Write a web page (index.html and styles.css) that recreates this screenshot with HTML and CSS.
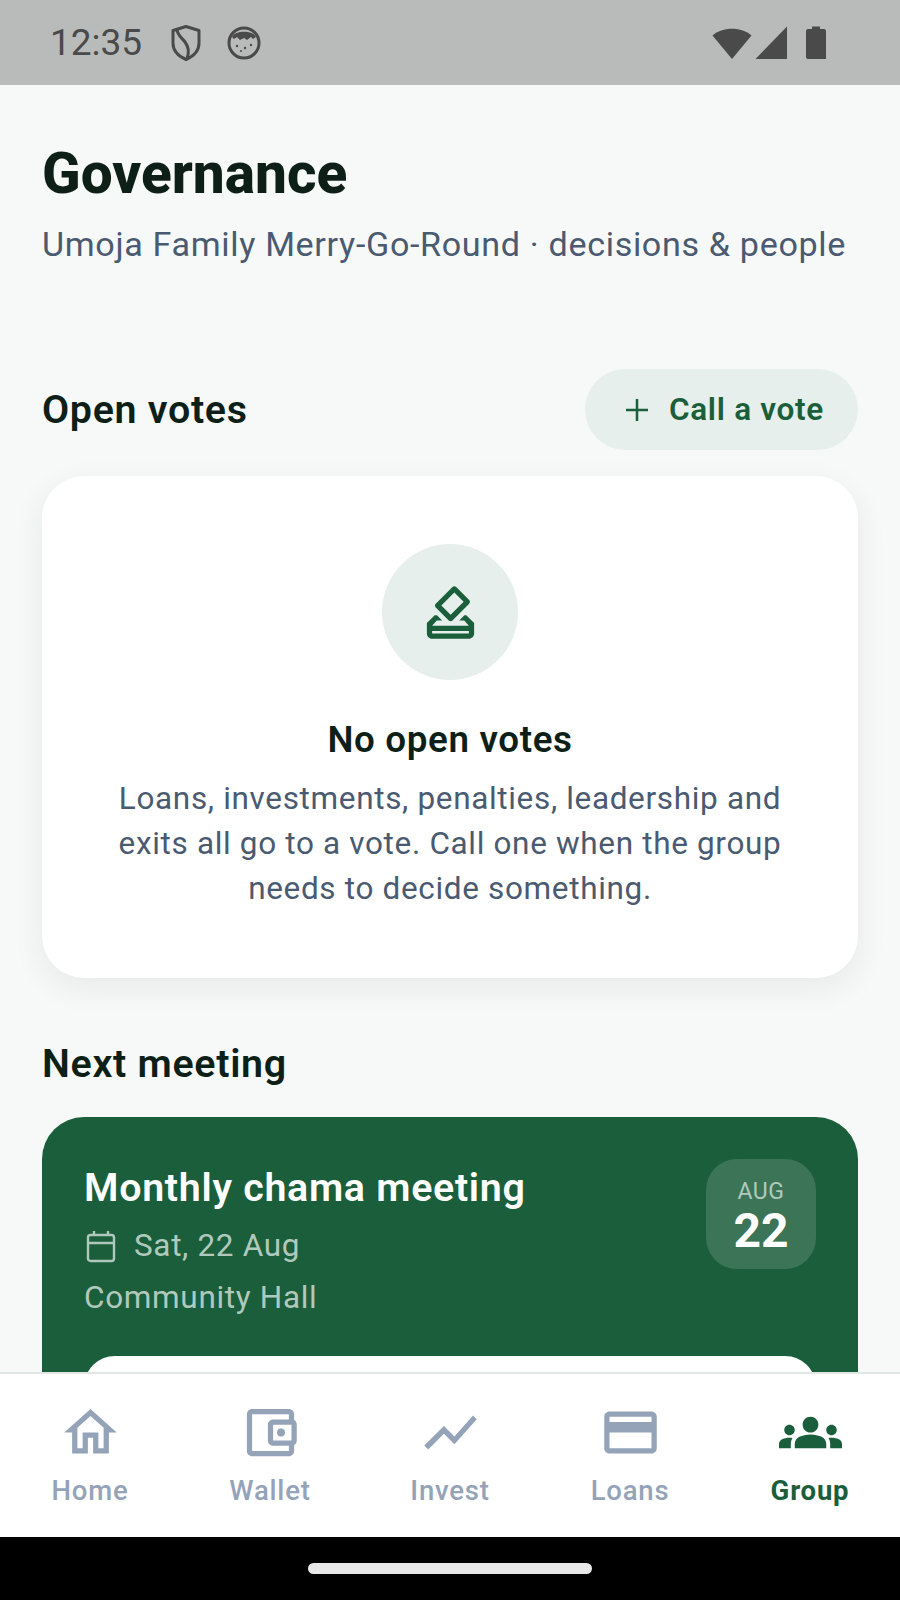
FILE: index.html
```html
<!DOCTYPE html>
<html lang="en">
<head>
    <meta charset="UTF-8">
    <meta name="viewport" content="width=device-width, initial-scale=1.0">
    <title>Governance</title>
    <link rel="stylesheet" href="styles.css">
</head>
<body>
<div class="screen">
    <!-- Status bar -->
    <div class="status-bar">
        <div class="status-left">
            <span class="clock">12:35</span>
            <svg class="shield-icon" viewBox="0 0 30 36" width="30" height="36">
                <path d="M15 1.500 L28 5.500 V18 C28 26 22 31.500 15 34.500 C8 31.500 2 26 2 18 V5.500 Z" fill="none" stroke="#4a4a4a" stroke-width="3" stroke-linejoin="round"/>
                <path d="M6 4 C6 10 11 13 14 17 C17 21 19 26 16 33" fill="none" stroke="#4a4a4a" stroke-width="3"/>
            </svg>
            <svg class="cookie-icon" viewBox="0 0 34 34" width="34" height="34">
                <circle cx="17" cy="17" r="15" fill="#b9baba" stroke="#4a4a4a" stroke-width="3"/>
                <path d="M5 11 C8 4 26 4 29 11 L26 13 L24 11 L20 14 L17 12 L13 14 L10 11 L7 13 Z" fill="#4a4a4a"/>
                <circle cx="10" cy="20" r="1.200" fill="#4a4a4a"/>
                <circle cx="18" cy="22" r="1.200" fill="#4a4a4a"/>
                <circle cx="24" cy="19" r="1.200" fill="#4a4a4a"/>
                <circle cx="14" cy="25" r="1" fill="#4a4a4a"/>
            </svg>
        </div>
        <div class="status-right">
            <svg viewBox="0 0 40 34" width="40" height="34"><path d="M0.500 9.500 C10 0.500 30 0.500 39.500 9.500 L20 33 Z" fill="#4a4a4a"/></svg>
            <svg viewBox="0 0 32 34" width="32" height="34"><path d="M32 0.500 V33 H0.500 Z" fill="#4a4a4a"/></svg>
            <svg class="battery-icon" viewBox="0 0 20 34" width="20" height="34"><path d="M6 0.500 H14 V3 H18 Q20 3 20 5 V33 H2 Q0 33 0 31 V5 Q0 3 2 3 H6 Z" fill="#4a4a4a"/></svg>
        </div>
    </div>

    <!-- Scrolling content -->
    <div class="content">
        <h1 class="page-title">Governance</h1>
        <p class="page-sub">Umoja Family Merry-Go-Round · decisions &amp; people</p>

        <div class="section-head">
            <h2 class="section-title">Open votes</h2>
            <button class="call-btn">
                <svg viewBox="0 0 22 22" width="22" height="22"><path d="M11 0 V22 M0 11 H22" fill="none" stroke="#1b5e3b" stroke-width="2.500"/></svg>
                Call a vote
            </button>
        </div>

        <div class="empty-card">
            <div class="empty-circle">
                <svg viewBox="0 0 24 24" width="63" height="63"><path fill="#1b5e3b" d="M18 13h-.68l-2 2h1.910L19 17H5l1.780-2h2.050l-2-2H6l-3 3v4c0 1.100.890 2 1.990 2H19c1.100 0 2-.890 2-2v-4l-3-3zm1 7H5v-1h14v1zm-7.660-4.980c.390.390 1.020.390 1.410 0l6.360-6.360c.390-.390.390-1.020 0-1.410L14.160 2.300c-.380-.400-1.010-.400-1.400-.010L6.390 8.660c-.390.390-.390 1.020 0 1.410l4.950 4.950zm2.120-10.610L17 7.950l-4.950 4.950-3.540-3.540 4.950-4.950z"/></svg>
            </div>
            <h3 class="empty-title">No open votes</h3>
            <p class="empty-text">Loans, investments, penalties, leadership and exits all go to a vote. Call one when the group needs to decide something.</p>
        </div>

        <h2 class="section-title next-title">Next meeting</h2>

        <div class="meeting-card">
            <div class="meeting-top">
                <div class="meeting-info">
                    <div class="meeting-name">Monthly chama meeting</div>
                    <div class="meeting-date">
                        <svg viewBox="0 0 30 33" width="30" height="33">
                            <rect x="2" y="5" width="26" height="26" rx="2.500" fill="none" stroke="#b1c9bc" stroke-width="2.400"/>
                            <path d="M2 13 H28 M8 1 V6 M22 1 V6" fill="none" stroke="#b1c9bc" stroke-width="2.400"/>
                        </svg>
                        <span>Sat, 22 Aug</span>
                    </div>
                    <div class="meeting-place">Community Hall</div>
                </div>
                <div class="date-chip">
                    <span class="chip-month">AUG</span>
                    <span class="chip-day">22</span>
                </div>
            </div>
            <div class="meeting-action"></div>
        </div>
    </div>

    <!-- Bottom navigation -->
    <div class="bottom-nav">
        <div class="nav-item">
            <svg viewBox="0 0 24 24" width="63" height="63"><path d="M12 5.690l5 4.500V18h-2v-6H9v6H7v-7.810l5-4.500M12 3L2 12h3v8h6v-6h2v6h6v-8h3L12 3z"/></svg>
            <span>Home</span>
        </div>
        <div class="nav-item">
            <svg viewBox="0 0 24 24" width="63" height="63"><path d="M21 7.280V5c0-1.100-.900-2-2-2H5c-1.110 0-2 .900-2 2v14c0 1.100.890 2 2 2h14c1.100 0 2-.900 2-2v-2.280c.590-.350 1-.980 1-1.720V9c0-.740-.410-1.380-1-1.720zM20 9v6h-7V9h7zM5 19V5h14v2h-6c-1.100 0-2 .900-2 2v6c0 1.100.900 2 2 2h6v2H5z"/><circle cx="16" cy="12" r="1.500"/></svg>
            <span>Wallet</span>
        </div>
        <div class="nav-item">
            <svg viewBox="0 0 24 24" width="63" height="63"><path d="M3.500 18.490l6-6.010 4 4L22 6.920l-1.410-1.410-7.090 7.970-4-4L2 16.990z"/></svg>
            <span>Invest</span>
        </div>
        <div class="nav-item">
            <svg viewBox="0 0 24 24" width="63" height="63"><path d="M20 4H4c-1.110 0-1.990.890-1.990 2L2 18c0 1.110.890 2 2 2h16c1.110 0 2-.890 2-2V6c0-1.110-.890-2-2-2zm0 14H4v-6h16v6zm0-10H4V6h16v2z"/></svg>
            <span>Loans</span>
        </div>
        <div class="nav-item active">
            <svg viewBox="0 0 24 24" width="63" height="63"><path d="M12 12.750c1.630 0 3.070.390 4.240.900 1.080.480 1.760 1.560 1.760 2.730V18H6v-1.610c0-1.180.680-2.260 1.760-2.730 1.170-.520 2.610-.910 4.240-.910zM4 13c1.100 0 2-.900 2-2s-.900-2-2-2-2 .900-2 2 .900 2 2 2zm1.130 1.100c-.370-.060-.740-.100-1.130-.100-.990 0-1.930.210-2.780.580C.480 14.900 0 15.620 0 16.430V18h4.500v-1.610c0-.830.230-1.610.630-2.290zM20 13c1.100 0 2-.900 2-2s-.900-2-2-2-2 .900-2 2 .900 2 2 2zm4 3.430c0-.810-.480-1.530-1.220-1.850-.850-.370-1.790-.580-2.780-.580-.390 0-.760.040-1.130.100.400.680.630 1.460.630 2.290V18H24v-1.570zM12 6c1.660 0 3 1.340 3 3s-1.340 3-3 3-3-1.340-3-3 1.340-3 3-3z"/></svg>
            <span>Group</span>
        </div>
    </div>

    <!-- Gesture bar -->
    <div class="gesture-bar">
        <div class="gesture-pill"></div>
    </div>
</div>
</body>
</html>
```

FILE: styles.css
```css
body {
    margin: 0;
    font-family: Roboto, "Liberation Sans", sans-serif;
}

.screen {
    width: 900px;
    height: 1600px;
    display: flex;
    flex-direction: column;
    overflow: hidden;
    background-color: #f7f9f8;
}

/* Status bar */
.status-bar {
    flex: none;
    height: 85px;
    background-color: #b9baba;
    color: #4a4a4a;
    display: flex;
    justify-content: space-between;
    align-items: center;
    padding: 0 74px 0 50px;
    box-sizing: border-box;
}

.status-left {
    display: flex;
    align-items: center;
}

.clock {
    font-size: 37px;
    margin-right: 29px;
}

.cookie-icon {
    margin-left: 26px;
}

.status-right {
    display: flex;
    align-items: center;
    gap: 3px;
}

.battery-icon {
    margin-left: 16px;
}

/* Scrolling content */
.content {
    flex: 1;
    min-height: 0;
    overflow: hidden;
    padding: 0 42px;
}

.page-title {
    margin: 55px 0 0;
    font-size: 56.75px;
    line-height: 68px;
    font-weight: 800;
    color: #0d1f17;
}

.page-sub {
    margin: 13px 0 0;
    font-size: 34.125px;
    line-height: 46px;
    letter-spacing: 0.66px;
    color: #4a5a70;
    white-space: nowrap;
}

.section-head {
    display: flex;
    justify-content: space-between;
    align-items: center;
    margin-top: 102px;
}

.section-title {
    margin: 0;
    font-size: 39.4px;
    line-height: 52px;
    font-weight: 600;
    letter-spacing: 0.7px;
    color: #0d1f17;
}

.call-btn {
    height: 81px;
    padding: 0 34px 0 41px;
    border: none;
    border-radius: 41px;
    background-color: #e6efeb;
    color: #1b5e3b;
    font-family: inherit;
    font-size: 31.5px;
    font-weight: 600;
    letter-spacing: 0.7px;
    display: flex;
    align-items: center;
    gap: 21px;
}

/* Empty votes card */
.empty-card {
    margin-top: 26px;
    height: 502px;
    box-sizing: border-box;
    padding-top: 68px;
    background-color: white;
    border-radius: 42px;
    box-shadow: 0 10px 32px rgba(15, 31, 26, 0.07);
    display: flex;
    flex-direction: column;
    align-items: center;
}

.empty-circle {
    width: 136px;
    height: 136px;
    border-radius: 50%;
    background-color: #e6efeb;
    display: flex;
    justify-content: center;
    align-items: center;
}

.empty-title {
    margin: 36px 0 0;
    font-size: 36.75px;
    line-height: 48px;
    font-weight: 600;
    letter-spacing: 0.65px;
    color: #0d1f17;
}

.empty-text {
    margin: 12px 0 0;
    width: 690px;
    font-size: 31.5px;
    line-height: 45px;
    letter-spacing: 0.66px;
    text-align: center;
    color: #4a5a70;
}

.next-title {
    margin-top: 60px;
}

/* Next meeting card */
.meeting-card {
    margin-top: 27px;
    padding: 42px;
    background-color: #1b5e3b;
    border-radius: 42px;
}

.meeting-top {
    display: flex;
    justify-content: space-between;
    align-items: flex-start;
}

.meeting-name {
    font-size: 39.4px;
    line-height: 58px;
    font-weight: 600;
    letter-spacing: 0.7px;
    color: white;
}

.meeting-date {
    display: flex;
    align-items: center;
    gap: 18px;
    margin-top: 3px;
    padding-left: 2px;
    font-size: 31.5px;
    line-height: 52px;
    letter-spacing: 0.66px;
    color: #b1c9bc;
}

.meeting-place {
    font-size: 31.5px;
    line-height: 52px;
    letter-spacing: 0.66px;
    color: #b1c9bc;
}

.date-chip {
    width: 110px;
    height: 110px;
    box-sizing: border-box;
    padding-top: 6px;
    border-radius: 31px;
    background-color: rgba(255, 255, 255, 0.14);
    display: flex;
    flex-direction: column;
    justify-content: center;
    align-items: center;
}

.chip-month {
    font-size: 23px;
    line-height: 28px;
    letter-spacing: 0.5px;
    color: #b1c9bc;
}

.chip-day {
    font-size: 48px;
    line-height: 50px;
    font-weight: 700;
    color: white;
}

.meeting-action {
    height: 120px;
    margin-top: 32px;
    background-color: white;
    border-radius: 31px;
}

/* Bottom navigation */
.bottom-nav {
    flex: none;
    height: 165px;
    box-sizing: border-box;
    background-color: white;
    border-top: 2px solid #e2e7e6;
    display: grid;
    grid-template-columns: repeat(5, 1fr);
    padding-top: 27px;
}

.nav-item {
    display: flex;
    flex-direction: column;
    align-items: center;
    fill: #94a3b8;
    color: #94a3b8;
    font-size: 27.5px;
    font-weight: 500;
    letter-spacing: 0.8px;
}

.nav-item span {
    line-height: 36px;
    margin-top: 9px;
}

.nav-item.active {
    fill: #1b5e3b;
    color: #1b5e3b;
    font-weight: 700;
}

/* Gesture bar */
.gesture-bar {
    flex: none;
    height: 63px;
    box-sizing: border-box;
    background-color: black;
    padding-top: 26px;
    display: flex;
    justify-content: center;
}

.gesture-pill {
    width: 284px;
    height: 11px;
    border-radius: 6px;
    background-color: #e8e8e8;
}
```
